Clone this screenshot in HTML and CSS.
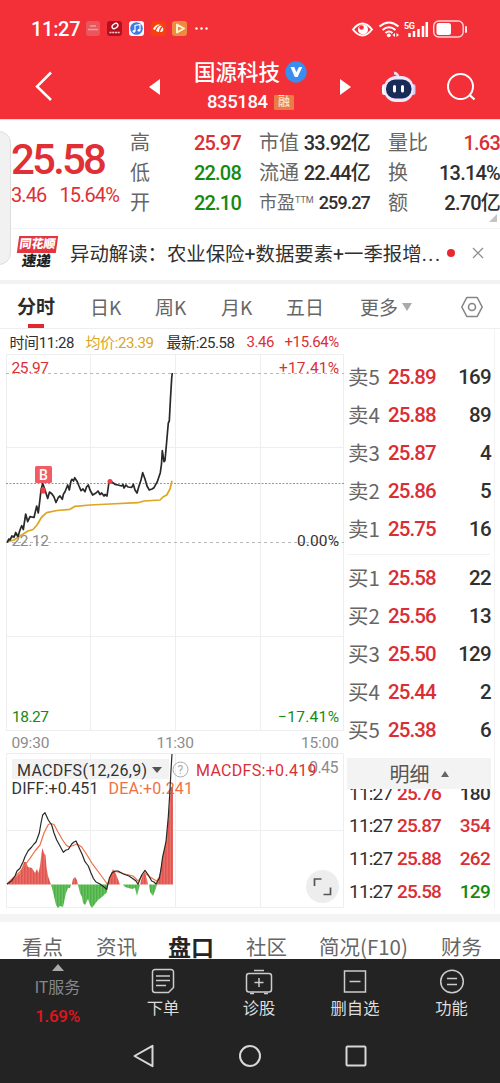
FILE: index.html
```html
<!DOCTYPE html>
<html lang="zh-CN">
  <head>
    <meta charset="UTF-8" />
    <meta name="viewport" content="width=device-width, initial-scale=1.0" />
    <title>国源科技 835184</title>
    <link rel="stylesheet" href="styles.css">
  </head>
  <body>
    <header class="top">
      <div class="status-bar">
        <span class="clock">11:27</span>
        <svg class="app-icons" width="125" height="18" viewBox="84 20 125 18">
          <rect x="86" y="21" width="14" height="15" rx="3" fill="#e9575d" />
          <path d="M88 29.500h10M90 26h6" stroke="#f39a9c" stroke-width="1.300" />
          <rect x="107" y="21" width="15" height="15" rx="3" fill="#b80d1d" />
          <ellipse cx="115" cy="26" rx="3.200" ry="2.200" fill="none" stroke="#fff" stroke-width="1.300" transform="rotate(-35 115 26)" />
          <path d="M109.500 32.500h10.500" stroke="#f6cfd0" stroke-width="1.500" stroke-dasharray="2 .7" />
          <rect x="129" y="21" width="15" height="15" rx="3" fill="#f4f8ff" />
          <circle cx="136.500" cy="28.500" r="6.300" fill="#3e7be0" />
          <path d="M135 31v-5.500l5-1v5.500" stroke="#fff" stroke-width="1.200" fill="none" />
          <circle cx="134" cy="31.300" r="1.400" fill="#fff" /><circle cx="139" cy="30.300" r="1.400" fill="#fff" />
          <rect x="151" y="21" width="15" height="15" rx="4" fill="#f5420d" />
          <path d="M153 29q3-6 8-4q-4 0-6 5zM156 31q2-6 6-5q-3 2-3 6zM160 32q1-4 3-5q1 3-1 5z" fill="#fff" />
          <rect x="172" y="21" width="15" height="15" rx="3" fill="#ee8b41" />
          <path d="M177 24.500v8l7-4z" fill="none" stroke="#fff3d0" stroke-width="2" stroke-linejoin="round" />
          <circle cx="196.500" cy="28.500" r="1.200" fill="#fff" /><circle cx="201.500" cy="28.500" r="1.200" fill="#fff" /><circle cx="206.500" cy="28.500" r="1.200" fill="#fff" />
        </svg>
        <svg class="signals" width="118" height="20" viewBox="350 18 118 20">
          <path d="M353 28.500q9.500-12 19 0q-9.500 12-19 0z" fill="none" stroke="#fff" stroke-width="2" />
          <circle cx="363" cy="28.500" r="5" fill="#fff" /><circle cx="361.500" cy="26.500" r="2.300" fill="#f33037" />
          <path d="M379.500 25.500q9.500-8 19 0M382.500 29q6.500-5.500 13 0M385.500 32q3.500-3 7 0" fill="none" stroke="#fff" stroke-width="2" />
          <circle cx="388.800" cy="34.300" r="1.900" fill="#fff" />
          <path d="M392.500 34l2.500-2v4zM399 34l-2.500-2v4z" fill="#fff" />
          <text class="net" x="404" y="28" textLength="11">5G</text>
          <path d="M409.500 36v-4M414 36v-6M418.500 36v-8M423 36v-11M426.800 36v-15" stroke="#fff" stroke-width="2.500" />
          <rect x="433.700" y="20" width="29.500" height="16" rx="5" fill="none" stroke="#ffd5d6" stroke-width="1.400" />
          <rect x="436.500" y="22" width="14.500" height="12" rx="2.500" fill="#fff" />
          <path d="M466 26v5" stroke="#fff" stroke-width="1.800" stroke-linecap="round" />
        </svg>
      </div>
      <nav class="title-bar">
        <svg width="20" height="32" viewBox="34 69 20 32"><path d="M51 70.500L37 84.500L51 98" fill="none" stroke="#fff" stroke-width="2.500" /></svg>
        <svg class="prev" width="12" height="18" viewBox="148 78 12 18"><path d="M149 87l11-8v16z" fill="#fff" /></svg>
        <div class="stock">
          <div class="stock-name">国源科技
            <svg width="22" height="22" viewBox="0 0 22 22"><circle cx="11" cy="11" r="10.700" fill="#398eee" /><path d="M5.500 6h3.800l2 5.300L14 6h3.300L12.600 16H9.800z" fill="#fff" /></svg>
          </div>
          <div class="stock-code">835184<span class="badge">融</span></div>
        </div>
        <svg class="next" width="12" height="18" viewBox="340 78 12 18"><path d="M351 87l-11-8v16z" fill="#fff" /></svg>
        <svg class="robot" width="36" height="34" viewBox="380 69 36 34">
          <path d="M397 76c2 0 0-4-3-4" fill="none" stroke="#eadcf7" stroke-width="3" />
          <rect x="382" y="83" width="5" height="11" rx="2.500" fill="#fff" /><rect x="410.500" y="83" width="5" height="11" rx="2.500" fill="#d8c8f7" />
          <rect x="384" y="75" width="29.500" height="26" rx="12" fill="#efe8fd" />
          <rect x="386" y="78.500" width="25.500" height="19" rx="9" fill="#192b57" />
          <path d="M394.500 85.500v4.500M402.500 85.500v4.500" stroke="#fff" stroke-width="3" stroke-linecap="round" />
        </svg>
        <svg class="search" width="32" height="32" viewBox="445 71 32 32"><circle cx="460.500" cy="86.500" r="12.500" fill="none" stroke="#fff" stroke-width="2" /><path d="M469 94.500l5.500 5" stroke="#fff" stroke-width="2.300" /></svg>
      </nav>
    </header>

    <section class="quote">
      <div class="price">
        <div class="last">25.58</div>
        <div class="change"><span>3.46</span><span>15.64%</span></div>
      </div>
      <dl class="stats">
        <dt>高</dt><dd class="up">25.97</dd>
        <dt>低</dt><dd class="down">22.08</dd>
        <dt>开</dt><dd class="down">22.10</dd>
      </dl>
      <dl class="stats">
        <dt>市值</dt><dd>33.92亿</dd>
        <dt>流通</dt><dd>22.44亿</dd>
        <dt class="pe">市盈<sup>TTM</sup></dt><dd class="pe">259.27</dd>
      </dl>
      <dl class="stats">
        <dt>量比</dt><dd class="up">1.63</dd>
        <dt>换</dt><dd>13.14%</dd>
        <dt>额</dt><dd>2.70亿</dd>
      </dl>
      <span class="corner"></span>
      <span class="side-handle"></span>
    </section>

    <section class="news">
      <div class="news-logo"><b>同花顺</b><i>速递</i></div>
      <p>异动解读：农业保险+数据要素+一季报增<span>...</span></p>
      <span class="dot"></span>
      <svg width="12" height="12" viewBox="0 0 12 12"><path d="M1 1l10 10M11 1L1 11" stroke="#8c8c8c" stroke-width="1.200" /></svg>
    </section>

    <nav class="periods">
      <span class="active">分时</span>
      <span>日K</span>
      <span>周K</span>
      <span>月K</span>
      <span>五日</span>
      <span class="more">更多<i></i></span>
      <svg width="24" height="24" viewBox="0 0 24 24"><path d="M6.800 2.500h10.400l5 9.500l-5 9.500H6.800L1.800 12z" fill="none" stroke="#858585" stroke-width="1.600" stroke-linejoin="round" /><circle cx="12" cy="12" r="3.500" fill="none" stroke="#858585" stroke-width="1.600" /></svg>
    </nav>

    <main class="market">
      <div class="chart-side">
        <div class="chart-info">
          <span>时间11:28</span>
          <span class="avg">均价:23.39</span>
          <span>最新:25.58</span>
          <span class="up">3.46</span>
          <span class="up">+15.64%</span>
        </div>
        <!-- intraday price, then MACD; one coordinate space for both panes -->
        <svg class="chart" width="345" height="556" viewBox="0 354 345 556">
          <defs>
            <pattern id="rise" width="1.500" height="10" patternUnits="userSpaceOnUse"><rect width="1.500" height="10" fill="#ef7770" /><rect width=".8" height="10" fill="#dc4f4b" /></pattern>
            <pattern id="fall" width="1.500" height="10" patternUnits="userSpaceOnUse"><rect width="1.500" height="10" fill="#72c768" /><rect width=".8" height="10" fill="#45ad40" /></pattern>
          </defs>
          <path class="grid" d="M6.500 354.500H343.500V730.500H6.500zM90.500 354V730M175.500 354V730M260.500 354V730M6 447.500H344M6 636.500H344" />
          <path class="grid" d="M6.500 753.500H343.500V907.500H6.500zM90.500 753V908M175.500 753V908M260.500 753V908M6 830.500H344" />
          <path class="dash" d="M6 373.500H344M6 542.500H344" />
          <path class="now" d="M6 483.500H344" />

          <text class="up" x="11.500" y="373" textLength="37.500">25.97</text>
          <text class="up" x="279" y="373" textLength="60">+17.41%</text>
          <text class="mid" x="11.500" y="546" textLength="37.500">22.12</text>
          <text x="297" y="546" textLength="42">0.00%</text>
          <text class="down" x="12" y="722" textLength="37">18.27</text>
          <text class="down" x="278" y="722" textLength="61">−17.41%</text>
          <text class="mid" x="11.500" y="748" textLength="38">09:30</text>
          <text class="mid" x="156.500" y="748" textLength="37.500">11:30</text>
          <text class="mid" x="301" y="748" textLength="38">15:00</text>

          <polyline class="avg-line" points="7,542 14,540 20,536 28,531 33,529.500 37,525 41.700,517 46.700,512.700 57,510.500 70,509.300 75,506.300 90,505 110,504 138,502.700 144,501 160,500 163,497 166.700,495 170,489 172,480.700" />
          <polyline class="price-line" points="7,542.500 9,539 10,540 12,536 14,537 15.700,532.500 18,536.500 20,530 21.700,525.700 23.300,529.500 25.700,514 27.700,521.700 30,516.700 34,517.500 36.700,506 38.300,513 40,499 41,490 42.700,483.500 45,490 47.700,498.500 49.500,492 52,494 54,497 56,502.500 58.300,497.500 60,496 62.300,499.300 63.500,494 65,491.700 67.700,485 69.300,490 71,481 72,479.300 73.500,481 74.700,477.700 77.300,481.700 79,486 81,490.700 83,489 85,491.700 86.500,487 88.300,485 90,490 92.700,495 96,493 98,491 100,494.500 101.700,493 104,496 105,494.500 107,496 109,482 110,480.700 115,484.300 118,485 121.700,486 123,484.500 124,488 126,485 128,487 131.700,487.300 133.300,484.300 135,490 137,493 139,486 141,480 142.700,472.700 145,479 147,486 149.300,490 152,489 154,487.700 157.300,481.700 160.300,472.700 161.500,464 162.300,450.700 164,461.700 165,460.500 167,438 168.300,423 169.300,421 170.500,398 171.700,378 172.300,373" />
          <rect x="40.500" y="487.500" width="5" height="6" rx="1.500" fill="#ef3d44" />
          <circle cx="110" cy="481.500" r="2.500" fill="#ef3d44" />
          <rect x="35" y="466" width="17" height="17" rx="1.500" fill="#f15c64" />
          <text class="buy" x="39" y="480" textLength="9">B</text>

          <rect x="12" y="759" width="157" height="20" fill="#f2f2f2" />
          <path d="M152 767h10l-5 6z" fill="#555" />
          <circle cx="180.500" cy="769.500" r="7.500" fill="none" stroke="#aaa" />
          <text class="help" x="177.500" y="774">?</text>
          <text class="macd" x="17" y="776" textLength="130">MACDFS(12,26,9)</text>
          <text class="macd mid" x="309" y="773" textLength="29.500">0.45</text>
          <text class="macd up" x="196" y="776" textLength="120.500">MACDFS:+0.419</text>
          <text class="macd" x="11.500" y="794" textLength="87">DIFF:+0.451</text>
          <text class="macd dea" x="108.500" y="794" textLength="84.500">DEA:+0.241</text>

          <path fill="url(#rise)" d="M7 884.500L12 880L20 873L24 862L26 862L28 867L32 868L35 873L37 869L38.500 873L40 866L41.500 853L42.500 848L44 853L45.500 855L46.500 867L48 876L51 884.500zM71.700 884.500L73 879L75 877L77 880L78 884.500zM108 884.500L110 876L113 869L116 874L120 884.500zM140 884.500L142 877L145 872L147 880L148 884.500zM156 884.500L159 879L162 862L166 842L169 812L171 787L173 787V884.500z" />
          <path fill="url(#fall)" d="M51 884.500L53 892L56 905L58 908L60 906L63 907L66 893L68 888L70 888L71 884.500zM78 884.500L80 893L82 897L83 903L85 905L88 899L90 905L92 908L95 904L98 900L102 897L107 892L108 884.500zM123 884.500L125 887L132 889L135 888L137 896L139 888L140 884.500zM149 884.500L150 892L153 896L156 888L157 884.500z" />
          <polyline class="dea-line" points="7,884 12,879 20,871.700 25,865 30,858.300 35,851 40,845 44,833 48.300,824.500 51,823.500 54,824.500 58,832 62,839 66,845 69,847 73,845.500 77,844 81.700,847 87,855 92,863.300 100,874 107.300,884 110,880 113,872 116,871.500 125,874 133,876 138,881 142,876 145,873 150,877 156.700,881 160,876 163,858 167,842" />
          <polyline class="diff-line" points="7,884 11.700,880.700 15,876 17,871 20,868.300 23,862 25,856.700 28,851 31.700,847 34,844 36,842 39.300,833 41,823 42.700,815 45,812.700 48.300,820 51.700,825 54,833 56.700,840 60,846 63.300,852.300 66,850 68.300,849.500 71.700,844 74,842 76,841 79.300,848.300 82,854 85,861.700 88.300,866 91,873 93.300,878.300 96,882 100,884 104,887 106.700,889.300 109.300,878.300 112,873 115,871 118,871 123.300,874 129,876 133.300,879 136,881 138,884.300 141.700,875 145,870.300 148.300,875 151.700,881 154,882 156,884 159.300,878.300 161,869 162.700,856.700 164,851 166,841.700 168.300,816.700 170,790 171,770 172,754" />

          <circle cx="322.500" cy="886.500" r="16.500" fill="#ededed" />
          <path d="M314.500 886v-7h7M323.500 894.500h7v-7" fill="none" stroke="#555" stroke-width="1.700" />
        </svg>
      </div>

      <aside class="book">
        <div class="level"><span>卖5</span><b>25.89</b><em>169</em></div>
        <div class="level"><span>卖4</span><b>25.88</b><em>89</em></div>
        <div class="level"><span>卖3</span><b>25.87</b><em>4</em></div>
        <div class="level"><span>卖2</span><b>25.86</b><em>5</em></div>
        <div class="level"><span>卖1</span><b>25.75</b><em>16</em></div>
        <hr />
        <div class="level"><span>买1</span><b>25.58</b><em>22</em></div>
        <div class="level"><span>买2</span><b>25.56</b><em>13</em></div>
        <div class="level"><span>买3</span><b>25.50</b><em>129</em></div>
        <div class="level"><span>买4</span><b>25.44</b><em>2</em></div>
        <div class="level"><span>买5</span><b>25.38</b><em>6</em></div>
        <div class="detail-head">明细<i></i></div>
        <div class="ticks">
          <div class="tick"><span>11:27</span><b>25.76</b><em>180</em></div>
          <div class="tick"><span>11:27</span><b>25.87</b><em class="up">354</em></div>
          <div class="tick"><span>11:27</span><b>25.88</b><em class="up">262</em></div>
          <div class="tick"><span>11:27</span><b>25.58</b><em class="down">129</em></div>
        </div>
      </aside>
    </main>

    <nav class="sections">
      <span>看点</span>
      <span>资讯</span>
      <span class="active">盘口</span>
      <span>社区</span>
      <span>简况(F10)</span>
      <span>财务</span>
    </nav>

    <footer class="bottom">
      <div class="actions">
        <div class="sector"><i></i><span>IT服务</span><b>1.69%</b></div>
        <div class="action">
          <svg width="26" height="28" viewBox="0 0 26 28"><path d="M5 2.500h16a2.500 2.500 0 0 1 2.500 2.500v15.500l-5 5H5A2.500 2.500 0 0 1 2.500 23V5A2.500 2.500 0 0 1 5 2.500zM6 9h14M6 13.500h14M6 18.500h10" /></svg>
          <span>下单</span>
        </div>
        <div class="action">
          <svg width="28" height="28" viewBox="0 0 28 28"><rect x="1.500" y="6.500" width="25" height="18.500" rx="2.500" /><path d="M9 3.500h10M14 11v9M9.500 15.500h9M5 26.500h4M19 26.500h4" /></svg>
          <span>诊股</span>
        </div>
        <div class="action">
          <svg width="26" height="28" viewBox="0 0 26 28"><rect x="2.500" y="4" width="21" height="21" /><path d="M7.500 14.500h11" /></svg>
          <span>删自选</span>
        </div>
        <div class="action">
          <svg width="26" height="28" viewBox="0 0 26 28"><circle cx="13" cy="14.500" r="11.300" /><path d="M8 11.500h10M8 17.500h10" /></svg>
          <span>功能</span>
        </div>
      </div>
      <div class="system-nav">
        <svg width="24" height="24" viewBox="0 0 24 24"><path d="M2.500 12L20.500 1.800v20.400z" /></svg>
        <svg width="24" height="24" viewBox="0 0 24 24"><circle cx="12" cy="12" r="10" /></svg>
        <svg width="24" height="24" viewBox="0 0 24 24"><rect x="2.500" y="2.500" width="19" height="19" rx="1" /></svg>
      </div>
    </footer>
  </body>
</html>
```
FILE: styles.css
```css
* {
  box-sizing: border-box;
}

body {
  margin: 0;
  width: 500px;
  height: 1083px;
  overflow: hidden;
  background: #fff;
  color: #303030;
  font-family: Roboto, "Noto Sans CJK SC", sans-serif;
}

svg {
  display: block;
  flex-shrink: 0;
}

em,
i {
  font-style: normal;
}

/* header */
.top {
  height: 120px;
  background: #f33037;
  border-bottom: 1px solid #ffd6cf;
  color: #fff;
}

.status-bar {
  display: flex;
  align-items: center;
  height: 56px;
  padding: 2px 32px 0 31px;
}

.clock {
  width: 53px;
  font-size: 20px;
  font-weight: 500;
  letter-spacing: -0.3px;
}

.signals {
  margin-left: auto;
}

.net {
  fill: #fff;
  font-size: 9px;
  font-weight: 700;
}

.title-bar {
  display: flex;
  align-items: center;
  height: 62px;
  padding-left: 34px;
}

.prev {
  margin-left: 94px;
}

.stock {
  width: 113px;
  margin-left: 34px;
}

.stock-name {
  display: flex;
  align-items: center;
  gap: 5px;
  height: 27px;
  font-size: 21.5px;
  font-weight: 500;
  line-height: 27px;
  white-space: nowrap;
}

.stock-code {
  display: flex;
  align-items: center;
  gap: 6px;
  height: 30px;
  padding: 3px 0 0 13px;
  font-size: 18.5px;
  font-weight: 500;
  letter-spacing: -0.4px;
}

.badge {
  width: 20px;
  height: 15px;
  border-radius: 1px;
  background: #e87e45;
  color: #ffe7c5;
  font-size: 12px;
  line-height: 15px;
  text-align: center;
}

.next {
  margin-left: 33px;
}

.robot {
  margin-left: 28px;
}

.search {
  margin-left: 29px;
}

/* quote */
.quote {
  position: relative;
  display: flex;
  height: 108px;
  padding-top: 8px;
}

.price {
  width: 130px;
  padding: 10px 0 0 11px;
  color: #e02f35;
}

.last {
  height: 42px;
  font-size: 42px;
  font-weight: 500;
  line-height: 44px;
  letter-spacing: -2.8px;
}

.change {
  display: flex;
  gap: 13px;
  font-size: 20px;
  line-height: 30px;
  letter-spacing: -0.9px;
}

.stats {
  display: grid;
  grid-template-columns: 40px 1fr;
  grid-auto-rows: 30px;
  align-items: center;
  width: 111px;
  height: 90px;
  margin: 0 18px 0 0;
  font-size: 20px;
  line-height: 30px;
  white-space: nowrap;
}

.stats:nth-of-type(3) {
  width: 112px;
  margin: 0;
}

.stats dt {
  color: #666;
}

.stats dd {
  margin: 0;
  font-weight: 500;
  letter-spacing: -0.8px;
  text-align: right;
}

.stats .pe {
  font-size: 18px;
}

.stats dd.pe {
  letter-spacing: -0.8px;
}

.stats sup {
  font-size: 9px;
  line-height: 0;
  vertical-align: 6px;
}

.corner {
  position: absolute;
  right: 3px;
  bottom: 6px;
  border-style: solid;
  border-width: 0 0 8px 8px;
  border-color: transparent transparent #c4c4c4;
}

.side-handle {
  position: absolute;
  top: 11px;
  left: -2px;
  width: 13px;
  height: 134px;
  border: 1px solid #ddd;
  border-radius: 0 12px 12px 0;
  background: #f1f1f1;
}

.up {
  color: #da3035;
}

.down {
  color: #158a13;
}

/* news strip */
.news {
  display: flex;
  align-items: center;
  height: 56px;
  padding: 0 16px 4px 18px;
  border-top: 1px solid #f4f4f4;
  border-bottom: 4px solid #f2f2f2;
}

.news-logo {
  width: 52px;
  line-height: 17px;
}

.news-logo b {
  display: block;
  width: 39px;
  height: 17px;
  background: #e13640;
  color: #fff;
  font-size: 12px;
  font-weight: 900;
  text-align: center;
  transform: skewX(-8deg);
}

.news-logo i {
  display: block;
  width: 37px;
  color: #222;
  font-size: 14.5px;
  font-weight: 900;
  text-align: center;
  transform: skewX(-8deg);
}

.news p {
  width: 377px;
  margin: 0;
  font-size: 19.4px;
  white-space: nowrap;
}

.news p span {
  letter-spacing: 1.6px;
}

.dot {
  width: 8px;
  height: 8px;
  margin-right: 17px;
  border-radius: 50%;
  background: #e7282e;
}

/* chart periods */
.periods {
  display: grid;
  grid-template-columns: 73px 65px 66px 65px 74px 100px 24px;
  align-items: center;
  height: 45px;
  padding-left: 17px;
  border-bottom: 1px solid #eee;
  color: #666;
  font-size: 19px;
  font-family: "Noto Sans CJK SC", sans-serif;
}

.periods .active {
  color: #2b2b2b;
  font-weight: 700;
  height: 45px;
  line-height: 44px;
  background: linear-gradient(#df2931, #df2931) 11px 40px / 16px 4px no-repeat;
}

.more {
  display: flex;
  align-items: center;
  gap: 4px;
}

.more i {
  border: solid transparent;
  border-width: 8px 5px 0;
  border-top-color: #aaa;
}

/* chart and order book */
.market {
  display: flex;
  height: 585px;
}

.chart-side {
  width: 347px;
}

.chart-info {
  display: grid;
  grid-template-columns: 76px 81px 80px 38px 60px;
  align-items: center;
  height: 25px;
  padding-left: 9.5px;
  font-size: 15px;
  letter-spacing: -0.4px;
  white-space: nowrap;
}

.avg {
  color: #daa51f;
}

.chart text {
  fill: #333;
  font-size: 15.5px;
}

.chart .up {
  fill: #da3035;
}

.chart .down {
  fill: #158a13;
}

.chart .mid {
  fill: #8c8c8c;
}

.chart .dea {
  fill: #ef7143;
}

.chart .buy {
  fill: #fff;
  font-size: 14px;
  font-weight: 500;
}

.chart .macd {
  font-size: 16px;
}

.chart .help {
  fill: #aaa;
  font-size: 12px;
}

.grid {
  fill: none;
  stroke: #eee;
}

.dash {
  stroke: #b8b8b8;
  stroke-dasharray: 3 3;
}

.now {
  stroke: #d98a30;
  stroke-dasharray: 2 1.5;
}

.price-line,
.avg-line,
.diff-line,
.dea-line {
  fill: none;
  stroke: #292929;
  stroke-width: 1.7;
  stroke-linejoin: round;
}

.avg-line {
  stroke: #dca61e;
}

.diff-line {
  stroke-width: 1.2;
}

.dea-line {
  stroke: #ec7144;
  stroke-width: 1.2;
}

.book {
  width: 148px;
  height: 580px;
  padding-top: 29px;
  border-right: 1px solid #f3f3f3;
}

.level,
.tick {
  display: grid;
  grid-template-columns: 40px 60px 43px;
  align-items: center;
  height: 38px;
  padding-left: 1px;
  font-size: 20.5px;
  line-height: 38px;
}

.level b,
.tick b {
  color: #da2e34;
  font-weight: 500;
  letter-spacing: -0.9px;
}

.level span {
  height: 38px;
  color: #666;
  line-height: 36px;
  font-family: "Noto Sans CJK SC", sans-serif;
}

.level em,
.tick em {
  font-weight: 500;
  letter-spacing: -0.7px;
  text-align: right;
}

.book hr {
  height: 1px;
  margin: 6px 4px 4px 0;
  border: 0;
  background: #f1f1f1;
}

.detail-head {
  display: flex;
  align-items: center;
  justify-content: center;
  gap: 11px;
  width: 144px;
  height: 31px;
  margin-top: 9px;
  background: #f3f3f3;
  color: #555;
  font-size: 20px;
}

.detail-head i {
  border: solid transparent;
  border-width: 0 4px 6px;
  border-bottom-color: #666;
}

.ticks {
  display: flex;
  flex-direction: column;
  justify-content: flex-end;
  height: 119px;
  overflow: hidden;
}

.tick {
  grid-template-columns: 48px 52px 41px;
  flex-shrink: 0;
  height: 32.7px;
  padding-left: 2px;
  font-size: 19px;
  line-height: 32px;
  letter-spacing: -0.8px;
}

/* section tabs, cut by the bottom bar */
.sections {
  display: grid;
  grid-template-columns: 74px 72px 78px 73px 122px 50px;
  align-items: center;
  height: 45px;
  padding-left: 22px;
  border-top: 8px solid #f4f4f4;
  overflow: hidden;
  color: #666;
  font-size: 20.5px;
  line-height: 49px;
  font-family: "Noto Sans CJK SC", sans-serif;
}

.sections span {
  height: 37px;
}

.sections .active {
  color: #252525;
  font-size: 23px;
  font-weight: 700;
}

/* bottom bars */
.bottom {
  height: 124px;
  background: #232323;
}

.actions {
  display: grid;
  grid-template-columns: 115px 96px 96px 96px 97px;
  height: 73px;
}

.sector,
.action {
  display: flex;
  flex-direction: column;
  align-items: center;
}

.sector {
  padding-top: 5px;
  color: #85878b;
  font-size: 16px;
}

.sector i {
  border: solid transparent;
  border-width: 0 6px 7px;
  border-bottom-color: #aaa;
}

.sector span {
  height: 30px;
  line-height: 33px;
}

.sector b {
  color: #e2141c;
  font-weight: 500;
  font-size: 17px;
  line-height: 30px;
  letter-spacing: -0.3px;
}

.action {
  padding-top: 8px;
  color: #ddd;
  font-size: 16.3px;
  line-height: 28px;
}

.action svg,
.system-nav svg {
  fill: none;
  stroke: #ccc;
  stroke-width: 1.5;
}

.system-nav {
  display: flex;
  justify-content: center;
  gap: 82px;
  padding: 12px 0 0 0;
}

.system-nav svg {
  stroke: #d8d8d8;
  stroke-width: 2;
  stroke-linejoin: round;
}
```
